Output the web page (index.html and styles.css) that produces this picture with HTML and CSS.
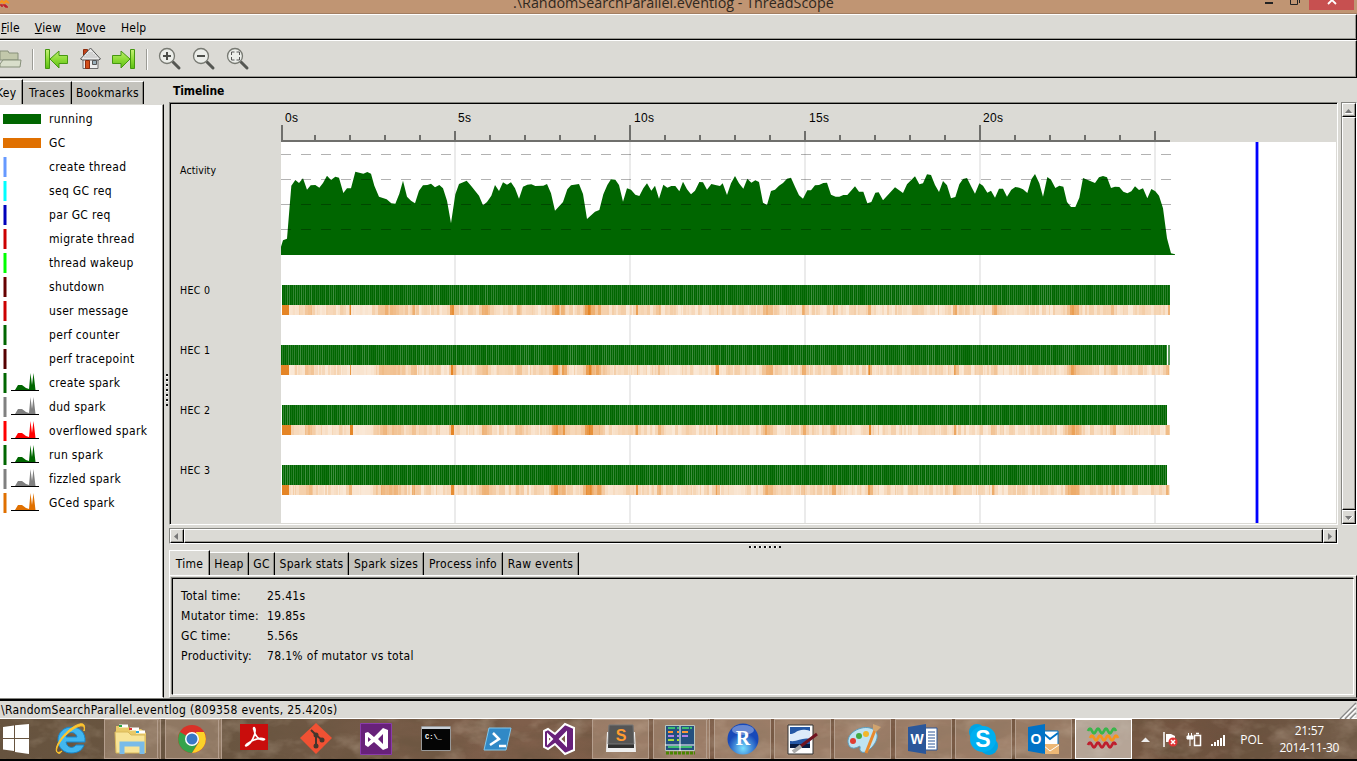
FILE: index.html
```html
<!DOCTYPE html>
<html lang="en">
<head>
<meta charset="utf-8">
<title>ThreadScope</title>
<link rel="stylesheet" href="styles.css">
</head>
<body>
<header class="titlebar">
  <svg class="app-mark" width="10" height="8"><path d="M0 3l2-2 2 2 2-2 3 2" stroke="#f7941d" stroke-width="2" fill="none"/><path d="M0 5h2v2m1-2h2v2m1-2v2h2" stroke="#be1e2d" stroke-width="1.6" fill="none"/></svg>
  <span class="title-text">.\RandomSearchParallel.eventlog - ThreadScope</span>
  <svg class="window-buttons" width="100" height="13"><path d="M8 2h8v2H8z" fill="#222"/><path d="M33.500 0v4.500h7V0M42.500 0v3" stroke="#222" fill="none"/><path d="M52 0h45v10H52z" fill="#c75050"/><path d="M71 4l4-4 4 4" stroke="#fff" stroke-width="1.800" fill="none"/></svg>
</header>
<nav class="menubar"><span><u>F</u>ile</span><span><u>V</u>iew</span><span><u>M</u>ove</span><span>Help</span></nav>
<div class="toolbar">
  <svg width="260" height="34" viewBox="0 42 260 34">
    <defs><linearGradient id="lime" x2="0" y2="1"><stop stop-color="#c5ef78"/><stop offset=".5" stop-color="#8fdc38"/><stop offset="1" stop-color="#5bbf12"/></linearGradient>
    <g id="lens"><path d="M11 10l6 6" stroke="#555753" stroke-width="3" stroke-linecap="round"/><circle r="7.500" cx="5" cy="4" fill="#eceeea" stroke="#777972" stroke-width="1.300"/></g></defs>
    <path d="M0 51h8l1 2h9v7H0z" fill="#c2c8ab" stroke="#87907a"/><path d="M3 60h18l-1 7H0v-3z" fill="#d9decb" stroke="#87907a"/>
    <path d="M32.500 49v21M146.500 49v21" stroke="#9b9b95"/><path d="M33.500 49v21M147.500 49v21" stroke="#fff"/>
    <path d="M45.500 49.500h4v19h-4zM50 59l9-8v4.500h8.500v8H59V68z" fill="url(#lime)" stroke="#459710" stroke-linejoin="round"/>
    <path d="M130.500 49.500h4v19h-4zM130 59l-9-8v4.500h-8.500v8H121V68z" fill="url(#lime)" stroke="#459710" stroke-linejoin="round"/>
    <path d="M83.500 49.500h4v6h-4z" fill="#c44218" stroke="#8c2b0c"/><path d="M83 58h15v10.500H83z" fill="#eee" stroke="#6d6d6d"/><path d="M80.500 59l10-11 10 11-2 1H82.500z" fill="#e8e8e8" stroke="#555"/><path d="M84 57h13M86 55h9M88 53h5" stroke="#bbb"/><path d="M85.500 60.500h4v8h-4z" fill="#d44f1b" stroke="#8c2b0c"/><path d="M92.500 60.500h4v4h-4z" fill="#9bb0bb" stroke="#555"/>
    <use href="#lens" x="162" y="52"/><path d="M163 56h8m-4-4v8" stroke="#4d4f4b" stroke-width="2"/>
    <use href="#lens" x="196" y="52"/><path d="M197 56h8" stroke="#4d4f4b" stroke-width="2"/>
    <use href="#lens" x="230" y="52"/><path d="M231.500 55v-3h3m2 0h3v3m0 2v3h-3m-2 0h-3v-3" fill="none" stroke="#555"/>
  </svg>
</div>
<main class="workspace">
  <aside class="sidebar">
    <div class="tabs side-tabs"><span class="tab active">Key</span><span class="tab">Traces</span><span class="tab">Bookmarks</span></div>
    <ul class="key-list" id="keys"></ul>
  </aside>
  <div class="grip-v"><i></i></div>
  <section class="content">
    <h1>Timeline</h1>
    <div class="timeline-row">
      <div class="timeline"><svg id="chart" width="1166" height="420" viewBox="171 104 1166 420"></svg></div>
      <div class="scroll-v"><button><svg width="11" height="11"><path d="M2 8h7L5.500 4z" fill="#777"/><path d="M2 8.500h8" stroke="#fff"/></svg></button><b></b><button><svg width="11" height="11"><path d="M2 4h7L5.500 8z" fill="#777"/><path d="M6 8l4-4" stroke="#fff"/></svg></button></div>
    </div>
    <div class="scroll-h"><button><svg width="10" height="11"><path d="M7 2v7L3 5.500z" fill="#777"/></svg></button><b></b><button><svg width="10" height="11"><path d="M4 2v7l4-3.500z" fill="#777"/></svg></button></div>
    <div class="grip-h"><i></i></div>
    <div class="tabs info-tabs"><span class="tab active">Time</span><span class="tab">Heap</span><span class="tab">GC</span><span class="tab">Spark stats</span><span class="tab">Spark sizes</span><span class="tab">Process info</span><span class="tab">Raw events</span></div>
    <div class="info-page"><dl class="stats"><dt>Total time:</dt><dd>25.41s</dd><dt>Mutator time:</dt><dd>19.85s</dd><dt>GC time:</dt><dd>5.56s</dd><dt>Productivity:</dt><dd>78.1% of mutator vs total</dd></dl></div>
  </section>
</main>
<footer class="statusbar"><span>\RandomSearchParallel.eventlog (809358 events, 25.420s)</span><svg width="18" height="17"><path d="M1 17L17 1M6 17L17 6M11 17l6-6" stroke="#888" stroke-width="1.500"/><path d="M3 17L17 3M8 17l9-9M13 17l4-4" stroke="#fff" stroke-width="1.300"/></svg></footer>
<div class="taskbar">
  <svg class="grain" width="1357" height="40"><filter id="wood"><feTurbulence type="fractalNoise" baseFrequency=".018 .05" numOctaves="5" seed="8"/><feColorMatrix values="0 0 0 0 .14  0 0 0 0 .09  0 0 0 0 .05  2.6 0 0 0 -.9"/></filter><filter id="scuff"><feTurbulence type="fractalNoise" baseFrequency=".03 .05" numOctaves="4" seed="21"/><feColorMatrix values="0 0 0 0 .75  0 0 0 0 .62  0 0 0 0 .48  0 2.4 0 0 -1.15"/></filter><rect width="1357" height="40" filter="url(#wood)" opacity=".6"/><rect width="1357" height="40" filter="url(#scuff)" opacity=".3"/></svg>
  <div class="launch start"><svg width="40" height="40"><path d="M3 8l11-1.500V19H3zM15 6.300L29 5v14H15zM3 20h11v12L3 30.500zM15 20h14v15l-14-2z" fill="#fff"/></svg></div>
  <div class="launch ie"><svg width="40" height="40" viewBox="-20 -20 40 40"><path d="M13 6h-8C2 10-4 9-5 3h19C15-7 8-12 1-12c-9 0-14 6-14 13 0 8 6 13 13 13 6 0 11-2 13-8zM-5-2c1-6 10-6 11 0z" fill="#42b7f0" stroke="#1687cc"/><path d="M-9 12c-10 6-5-8 5-17C5-13 15-17 13-8c3-10-5-9-15-1S-18 12-13 14c1 1 3 0 4-2z" fill="#ffc52e" stroke="#ffc52e"/></svg></div>
  <div class="launch framed stacked"><svg width="40" height="38" viewBox="-20 -19 40 38"><path d="M-15-13h12l2 3h11l5 4v20h-30z" fill="#e9c967"/><path d="M-12-13h9m2 3h9m-3 3h9" stroke="#fff" stroke-width="3"/><path d="M-12-13h3" stroke="#27a844" stroke-width="2"/><path d="M-2-10h3" stroke="#d33" stroke-width="2"/><path d="M5-7h3" stroke="#2aa7df" stroke-width="2"/><path d="M-16-7H-3l3 3h14v18h-29z" fill="#f8e497" stroke="#d9b85b"/><path d="M-9 15V5H11v10" fill="none" stroke="#79bbe8" stroke-width="5"/></svg></div>
  <div class="launch framed stacked"><svg width="40" height="38" viewBox="-20 -19 40 38"><circle r="14" fill="#da3127"/><path d="M0 0l-12-7A14 14 0 000 14l6-10z" fill="#35a34a"/><path d="M4-7h8A14 14 0 010 14L7 3z" fill="#fbd229"/><circle r="7" fill="#fff"/><circle r="5.500" fill="#3978c6"/></svg></div>
  <div class="launch"><svg width="40" height="40" viewBox="-20 -20 40 40"><path d="M-15-15h28v26h-28z" fill="#c90d0c"/><path d="M-9 7C-4 5 1-4 0-10c-1-3-2-1-1 1 1 6 5 10 9 10 5-1-3-3-9 0-5 2-10 6-8 6z" fill="none" stroke="#fff" stroke-width="1.600"/></svg></div>
  <div class="launch"><svg width="40" height="40" viewBox="-20 -20 40 40"><path d="M0-16L16-1 0 15-16-1z" fill="#f05133"/><path d="M-5-9L0-4V8M0-4l6 5" fill="none" stroke="#45362c" stroke-width="2"/><g fill="#45362c"><circle cy="-4" r="2.500"/><circle cy="7" r="2.500"/><circle cx="6" cy="1" r="2.500"/></g></svg></div>
  <div class="launch"><svg width="40" height="40" viewBox="-20 -20 40 40"><path d="M-16.500-15.500h31v31h-31z" fill="#68217a" stroke="#8b3caa"/><path d="M-12-6l3-1 6 5 9-9 5 2V9L6 11-3 3l-6 5-3-2zM-9-2v5l3-2.500zM6-5L1 0l5 5z" fill="#fff" fill-rule="evenodd"/></svg></div>
  <div class="launch"><svg width="40" height="40" viewBox="-20 -20 40 40"><path d="M-16.500-12.500h29v24h-29z" fill="#050505" stroke="#999"/><path d="M-16-12h28v2h-28z" fill="#c9d0d8"/><text x="-13" y="0" class="cmd-text">C:\_</text></svg></div>
  <div class="launch"><svg width="40" height="40" viewBox="-20 -20 40 40"><path d="M-10-11h22L7 11h-22z" fill="#3189c6" stroke="#82c7ea"/><path d="M-6-6l6 6-9 6M0 7h7" stroke="#fff" stroke-width="2.500" fill="none"/></svg></div>
  <div class="launch"><svg width="40" height="40" viewBox="-20 -20 40 40"><path d="M-16-8l4-2 7 5L5-15l9 4v22l-9 4L-5 5l-7 5-4-2zM-12-4v8l4-4zM6-6L0 0l6 6z" fill="#68217a" stroke="#fff" stroke-width="2" fill-rule="evenodd"/></svg></div>
  <div class="launch framed"><svg width="40" height="38" viewBox="-20 -19 40 38"><path d="M-12-7h-2l-1 20h30L14-7z" fill="#eee"/><path d="M-12-14h24l1 20v3h-26V6z" fill="#303030"/><path d="M-12-14h24l1 19h-26z" fill="#555" stroke="#777"/><text y="2" class="sublime-text">S</text></svg></div>
  <div class="launch framed stacked"><svg width="40" height="38" viewBox="-20 -19 40 38"><path d="M-14.500-13.500h29v25h-29z" fill="#24507f" stroke="#b8c7c0"/><path d="M-12-11h7m7 0h7M-3-11h2m11 0h2M-12 8h24" stroke="#45e26d" stroke-width="1.500"/><path d="M-12-7h5m4 0h2m3 0h6" stroke="#ff9735" stroke-width="2"/><path d="M-12-3h6m3 0h2m3 0h6" stroke="#b47fe5" stroke-width="2"/><path d="M-12 1h6m3 0h2" stroke="#a5df39" stroke-width="2"/><path d="M0-13v25M-15 6h29" stroke="#fff"/><path d="M-14 14h29" stroke="#498700" stroke-width="3" stroke-dasharray="3 1"/></svg></div>
  <div class="launch framed later"><svg width="40" height="38" viewBox="-20 -19 40 38"><defs><radialGradient id="rball" cy=".8"><stop stop-color="#7ae0ff"/><stop offset="1" stop-color="#1749b9"/></radialGradient></defs><circle r="15.500" fill="url(#rball)"/><ellipse cy="-9" rx="11" ry="5" fill="#fff" opacity=".35"/><text y="6" class="r-text">R</text></svg></div>
  <div class="launch framed later"><svg width="40" height="38" viewBox="-20 -19 40 38"><path d="M-15-14h25v29h-25z" fill="#fff" stroke="#333"/><path d="M-13-12h20V8h-20z" fill="#2457a5"/><path d="M-13-5c6 1 7-7 20-3v8c-8-2-12 3-20 2z" fill="#dceafa"/><path d="M-13 5H7v4h-20z" fill="#091c42"/><path d="M14-5L-2 7" stroke="#701420" stroke-width="3"/><path d="M-2 7l-8 6" stroke="#aaa" stroke-width="4"/></svg></div>
  <div class="launch framed later"><svg width="40" height="38" viewBox="-20 -19 40 38"><path d="M-13 8C-21-3-4-14 7-11c11 3 8 14 0 21-6 6-11 3-10-1 1-5-4 3-10-1z" fill="#bfe3f2" stroke="#5b9ebf"/><circle cx="-10" cy="2" r="3" fill="#df3d32"/><circle cx="-4" cy="-3" r="3" fill="#41aa44"/><circle cx="3" cy="-5" r="3" fill="#f2b72a"/><path d="M12-9L3 14" stroke="#e7882d" stroke-width="3"/><path d="M10-15l8 3-5 5-3-2z" fill="#d1a46f"/></svg></div>
  <div class="launch framed later"><svg width="40" height="38" viewBox="-20 -19 40 38"><path d="M2-11h12v22H2z" fill="#fff" stroke="#2b579a"/><path d="M5-7h7M5-4h7M5-1h7M5 2h7M5 5h7M5 8h7" stroke="#2b579a"/><path d="M-15-12L3-15v30l-18-3z" fill="#2b579a"/><text x="-6" y="5" class="word-text">W</text></svg></div>
  <div class="launch framed later"><svg width="40" height="38" viewBox="-20 -19 40 38"><circle cx="-6" cy="-7" r="8" fill="#00a4e4"/><circle cx="6" cy="7" r="9" fill="#00a4e4"/><circle r="13" fill="#00aff0"/><text y="8" class="skype-text">S</text></svg></div>
  <div class="launch framed later"><svg width="40" height="38" viewBox="-20 -19 40 38"><path d="M0-8h15V8H0z" fill="#fff" stroke="#0072c6"/><path d="M0-6l7 6 8-6" fill="none" stroke="#0072c6" stroke-width="2"/><path d="M0 5h16v10H0z" fill="#edb775"/><path d="M0 6l7 6 9-6" fill="none" stroke="#fff"/><path d="M-15-12L2-15v30l-17-3z" fill="#0072c6"/><text x="-7" y="5" class="outlook-text">O</text></svg></div>
  <div class="launch framed current later"><svg width="40" height="38" viewBox="-20 -19 40 38" fill="none" stroke-width="2.800"><path stroke="#39b54a" d="M-16-8q2-4.500 4 0t4 0 4 0 4 0 4 0 4 0 4 0"/><path stroke="#f7941d" d="M-14-1q2-4.500 4 0t4 0 4 0 4 0 4 0 4 0 4 0"/><path stroke="#be1e2d" d="M-16 6q2-4.500 4 0t4 0 4 0 4 0 4 0 4 0 4 0"/></svg></div>
  <div class="tray"><svg width="100" height="40" viewBox="1135 719 100 40"><path d="M1141 742h9l-4.500-4.500z" fill="#eee"/><path d="M1164 732v15" stroke="#fff" stroke-width="1.500"/><path d="M1166 734h5l4 2v6h-9z" fill="#fff"/><circle cx="1173" cy="742" r="4.500" fill="#df3434"/><path d="M1171 740l4 4m0-4l-4 4" stroke="#fff" stroke-width="1.500"/><path d="M1188.500 733v3m3-3v3M1187 736h6v3h-6zM1190 739v7" fill="#fff" stroke="#fff"/><path d="M1194.500 735.500h6v10h-6zM1196 733.500h3" fill="none" stroke="#fff" stroke-width="1.500"/><path d="M1212 746v-2m3 2v-4m3 4v-6m3 6v-8m3 8v-11" stroke="#fff" stroke-width="2"/></svg><span class="lang">POL</span><time>21:57<br>2014-11-30</time></div>
</div>
<script src="app.js"></script>
</body>
</html>
```
FILE: styles.css
```css
* { box-sizing: border-box; }
body { margin: 0; width: 1357px; height: 761px; overflow: hidden; display: flex; flex-direction: column; background: #dbdad5; color: #000; font: 12px/16px "DejaVu Sans Condensed", "DejaVu Sans", sans-serif; font-stretch: condensed; letter-spacing: .33px; }
svg { display: block; flex: none; letter-spacing: 0; }
.titlebar { height: 14px; flex: none; display: flex; background: #c09573; border-bottom: 1px solid #a27e62; overflow: hidden; }
.title-text { width: 330px; margin-left: 503px; font: 14.350px/20px "Open Sans", sans-serif; font-stretch: normal; letter-spacing: 0; margin-top: -7px; white-space: nowrap; color: #302820; }
.window-buttons { margin-left: auto; }
.menubar { height: 26px; flex: none; display: flex; align-items: center; gap: 15px; padding: 1px 0 0 1px; border: solid; border-width: 1px 1px 1px 0; border-color: #fff #000 #000; box-shadow: inset -1px -1px #999892; }
.menubar span { letter-spacing: .2px; }
.toolbar { height: 38px; flex: none; border: solid; border-width: 1px 1px 1px 0; border-color: #fff #000 #000; box-shadow: inset -1px -1px #999892; padding-top: 1px; }
.workspace { height: 620px; flex: none; display: flex; }
.sidebar { width: 164px; flex: none; display: flex; flex-direction: column; }
.tabs { display: flex; align-items: flex-end; white-space: nowrap; flex: none; letter-spacing: .28px; }
.tab { height: 23px; line-height: 23px; background: #c4c3bd; border-right: 1px solid #000; border-top: 1px solid #fff; box-shadow: inset -1px 0 #8f8e88; text-align: center; }
.tab.active { height: 25px; line-height: 27px; background: #dbdad5; }
.side-tabs { height: 26px; padding-top: 1px; overflow: hidden; }
.side-tabs .tab { width: 49px; }
.side-tabs .tab:first-child { width: 23px; text-indent: -4px; text-align: left; }
.side-tabs .tab:last-child { width: 72px; }
.key-list { list-style: none; margin: 0; padding: 2px 0 0 3px; flex: 1; background: #fff; border: solid; border-width: 1px 1px 1px 0; border-color: #dbdad5 #000 #fff; box-shadow: inset -1px 0 #999892; }
.key-list li { height: 24px; display: flex; align-items: center; }
.swatch { width: 46px; flex: none; }
.grip-v { width: 5px; flex: none; padding: 296px 0 0 2px; }
.grip-v i { display: block; width: 2px; height: 32px; background: repeating-linear-gradient(#111 0 2px, #fff 2px 3px, #dbdad5 3px 5px); }
.content { width: 1188px; flex: none; display: flex; flex-direction: column; }
h1 { margin: 0; height: 24px; font-size: 12px; line-height: 26px; padding-left: 4px; letter-spacing: -.1px; }
.timeline-row { display: flex; gap: 3px; height: 423px; }
.timeline { width: 1169px; border: solid; border-width: 1px; border-color: #858580 #fff #fff #858580; box-shadow: inset 1px 1px #000; padding: 1px 0 0 1px; overflow: hidden; }
.scroll-v { width: 16px; border: 1px solid; border-color: #858580 #fff #fff #858580; display: flex; flex-direction: column; }
button { flex: none; background: #dbdad5; border: 1px solid; border-color: #fff #000 #000 #fff; box-shadow: inset -1px -1px #999892; padding: 0; margin: 0; }
.scroll-v button { width: 14px; height: 14px; }
.scroll-v b, .scroll-h b { flex: 1; border: 1px solid; border-color: #fff #000 #000 #fff; box-shadow: inset -1px -1px #999892; }
.scroll-h { width: 1169px; height: 16px; flex: none; margin-top: 3px; display: flex; border: 1px solid; border-color: #858580 #fff #fff #858580; }
.scroll-h button { width: 14px; height: 14px; }
.grip-h { height: 5px; flex: none; padding: 2px 0 0 580px; }
.grip-h i { display: block; width: 32px; height: 2px; background: repeating-linear-gradient(90deg, #111 0 2px, #fff 2px 3px, #dbdad5 3px 5px); }
.info-tabs { height: 26px; }
.info-tabs .tab:nth-child(1) { width: 41px; border-left: 1px solid #fff; }
.info-tabs .tab:nth-child(2) { width: 39px; }
.info-tabs .tab:nth-child(3) { width: 26px; }
.info-tabs .tab:nth-child(4) { width: 74px; }
.info-tabs .tab:nth-child(5) { width: 75px; }
.info-tabs .tab:nth-child(6) { width: 79px; }
.info-tabs .tab:nth-child(7) { width: 76px; }
.info-page { flex: 1; border: solid; border-width: 1px 1px 1px; border-color: #fff #000 #858580 #fff; padding: 2px; display: flex; }
.stats { margin: 0; flex: 1; border: 1px solid; border-color: #000 #fff #fff #000; box-shadow: -1px -1px #858580; padding: 7px 8px; display: grid; grid-template-columns: 86px auto; grid-auto-rows: 20px; line-height: 20px; align-content: start; }
dd { margin: 0; }
.statusbar { height: 21px; flex: none; display: flex; justify-content: space-between; border-top: 1px solid #858580; border-bottom: 1px solid #fff; box-shadow: inset 0 2px #000; padding: 3px 0 0 1px; line-height: 16px; }
.taskbar { position: relative; height: 42px; flex: none; display: flex; border-bottom: 2px solid #000; background: linear-gradient(90deg, #66533f, #6c5743 20%, #7f5f4b 38%, #7b5b45 80%, #6c503e 92%, #79624f); color: #fff; letter-spacing: 0; }
.grain { position: absolute; inset: 0; }
.launch { position: relative; width: 57px; height: 40px; margin-right: 4px; flex: none; display: flex; justify-content: center; align-items: center; }
.start { width: 40px; margin: 0; justify-content: flex-start; }
.ie { width: 60px; margin-right: 4px; justify-content: flex-start; padding-left: 11px; }
.framed { border: 1px solid #b49e8d; background: rgba(200,172,150,.4); }
.stacked { border-right: 4px double #b49e8d; }
.later { margin-right: 3.200px; }
.current { border: 1px solid #fff; background: rgba(225,216,208,.6); }
.tray { position: relative; flex: 1; display: flex; align-items: center; font: 12px/17px "Open Sans", sans-serif; }
.lang { width: 36px; margin-left: 5px; }
.tray time { text-align: center; width: 66px; letter-spacing: -.3px; }
.cmd-text { font: bold 7px "Liberation Mono", monospace; fill: #fff; }
.sublime-text, .r-text, .word-text, .skype-text, .outlook-text { text-anchor: middle; fill: #fff; font: bold 17px "Liberation Sans", sans-serif; }
.sublime-text { fill: #ff9b30; font-size: 16px; }
.r-text { font-family: "Liberation Serif", serif; font-size: 20px; }
.word-text, .outlook-text { font-size: 14px; }
.skype-text { font-size: 23px; }
.axis-text { font: 12px "Liberation Sans", sans-serif; }
.row-text { font: 10.500px "DejaVu Sans Condensed", "DejaVu Sans", sans-serif; font-stretch: condensed; }
```
FILE: app.js
```js
const keyRows = [
  ['running', '#060', 'bar'], ['GC', '#e07000', 'bar'], ['create thread', '#69f', 'line'],
  ['seq GC req', '#0ff', 'line'], ['par GC req', '#00b', 'line'], ['migrate thread', '#c00', 'line'],
  ['thread wakeup', '#0f0', 'line'], ['shutdown', '#600', 'line'], ['user message', '#c00', 'line'],
  ['perf counter', '#060', 'line'], ['perf tracepoint', '#500', 'line'], ['create spark', '#060', 'spark'],
  ['dud spark', '#808080', 'spark'], ['overflowed spark', '#f00', 'spark'], ['run spark', '#060', 'spark'],
  ['fizzled spark', '#808080', 'spark'], ['GCed spark', '#e07000', 'spark']
];
document.getElementById('keys').innerHTML = keyRows.map(([label, color, kind]) => {
  let mark = `<rect y="2" width="4" height="20" fill="${color}" opacity=".5"/><rect x="1" y="2" width="2" height="20" fill="${color}"/>`;
  if (kind === 'bar') mark = `<rect y="7" width="38" height="10" fill="${color}"/>`;
  if (kind === 'spark') mark += `<path d="M12 19l3-5h4l4 3 3 1 1.500-16L29 14l1.500-12 2 17z" fill="${color}"/><path d="M8 19.500h28" stroke="#000"/>`;
  return `<li><svg class="swatch" width="46" height="24">${mark}</svg>${label}</li>`;
}).join('');

const left = '33,440 39,421 51,416 64,257 76,240 87,249 99,235 111,269 122,256 136,255 148,263 159,249 171,227 183,240 196,230 207,233 220,279 231,265 243,265 256,215 280,221 292,216 303,221 313,257 327,290 350,298 364,310 376,311 388,281 399,242 411,290 423,302 435,310 447,272 459,256 472,255 483,251 495,262 508,255 519,265 531,302 543,370 556,283 567,252 590,242 603,257 627,287 639,316 651,306 664,287 675,255 687,273 699,247 711,254 723,247 735,265 747,296 759,260 772,254 784,253 796,258 820,257 831,252 843,280 855,332 879,306 892,268 903,256 927,252 939,282 951,357 975,335 988,330 1000,283 1012,255 1023,238 1036,239 1047,255 1059,305 1071,265 1083,269 1096,284 1108,288 1120,265 1131,250 1144,272 1155,257 1167,296 1180,254 1192,263 1204,258 1216,258 1228,274 1239,245 1251,268 1263,283 1275,272 1288,246 1299,247 1311,269 1324,252 1336,255';
const right = '0,258 8,250 21,285 33,250 45,228 57,250 70,266 82,236 94,248 106,241 117,246 129,308 141,315 153,273 165,269 177,257 189,249 201,236 213,233 225,260 237,286 249,296 262,271 273,271 285,256 297,255 310,249 321,248 333,284 347,290 358,290 370,285 382,285 405,259 417,275 430,275 442,310 454,306 466,278 476,277 489,301 525,262 549,279 561,253 585,229 598,253 609,250 621,223 633,225 645,255 657,276 669,243 681,256 693,295 706,291 718,253 729,237 741,234 754,260 765,281 778,250 789,257 802,278 813,272 825,293 837,266 849,266 861,290 874,269 886,261 898,263 909,268 922,279 934,238 945,222 958,250 969,290 982,231 993,239 1006,264 1018,257 1030,260 1041,306 1053,321 1066,321 1078,293 1089,234 1125,249 1137,232 1149,228 1161,232 1173,264 1185,260 1198,261 1210,275 1222,280 1234,274 1245,259 1257,270 1269,265 1282,295 1294,267 1306,274 1317,287 1329,325 1341,415 1353,460 1365,463';
const read = (s, offset) => s.split(' ').map(p => { const [x, y] = p.split(',').map(Number); return [270 + (x + offset) / 3, 100 + y / 3]; });
const points = [...read(left, 0), ...read(right, 1350)];

let out = '<rect x="171" y="104" width="1166" height="420" fill="#dbdad5"/><rect x="281" y="142" width="1055" height="381" fill="#fff"/>';
for (let x = 455; x < 1170; x += 175) out += `<rect x="${x - 1}" y="142" width="2" height="381" fill="#ebebeb"/>`;
out += `<polygon points="281,255 ${points.join(' ')} 1175,255" fill="#060"/>`;
for (const y of [154, 179, 204, 229]) out += `<path d="M281 ${y + .5}H1171" stroke="#000" stroke-opacity=".3" stroke-dasharray="10 10"/>`;
out += '<rect x="281" y="140" width="889" height="2" fill="#6f6f6c"/>';
for (let i = 0; i <= 25; i++) {
  const x = i ? 279 + i * 35 : 281;
  const y = i % 10 === 0 ? 125 : i % 5 === 0 ? 131 : 135;
  out += `<rect x="${x}" y="${y}" width="2" height="${141 - y}" fill="#6f6f6c"/>`;
}
[[285, '0s'], [458, '5s'], [634, '10s'], [809, '15s'], [983, '20s']].forEach(([x, t]) => out += `<text class="axis-text" x="${x}" y="122" textLength="${t.length === 2 ? 13 : 20}">${t}</text>`);
out += '<text class="row-text" x="180" y="174" textLength="36">Activity</text>';

let seed = 17;
const rand = () => (seed = (seed * 16807) % 2147483647) / 2147483647;
const peaks = [[308, 4, .22], [350, 1.2, .55], [383, 7, .22], [396, 8, .18], [413, 2, .3], [451, 2, .58], [484, 5, .25], [518, 3, .18], [555, 4, .5], [563, 2, .4], [588, 5, .55], [598, 4, .3], [636, 1, .38], [658, 2, .28], [716, 1, .4], [767, 5, .3], [803, 2, .3], [833, 2, .35], [869, 1.200, .65], [954, 1.5, .45], [993, 2, .3], [1072, 6, .35], [1112, 2, .25], [1167, 1, .65]];
for (let row = 0; row < 4; row++) {
  const y = 285 + row * 60;
  const start = row === 1 ? 281 : 282;
  const end = row === 0 ? 1170 : 1167;
  out += `<text class="row-text" x="180" y="${y + 9}" textLength="30">HEC ${row}</text>`;
  out += `<rect x="${start}" y="${y}" width="${end - start}" height="20" fill="#060"/>`;
  for (let x = start + 1; x < end; x += 2) out += `<rect x="${x}" y="${y}" width="1" height="20" fill="#fff" opacity="${(.06 + rand() * .2).toFixed(2)}"/>`;
  if (row === 1) out += '<path d="M1169 345v20" stroke="#237923" stroke-width="1.500"/>';
  out += `<rect x="${start}" y="${y + 20}" width="${1170 - start}" height="10" fill="#fff"/>`;
  for (let x = start; x < 1170;) {
    const w = 1 + Math.floor(rand() * 3);
    let alpha = .15 + rand() * .2;
    for (const [p, r, a] of peaks) alpha += a * Math.exp(-(((x - p) / r) ** 2));
    if (x < 289) alpha = .85;
    if (x > 350 && x < 372) alpha = .16 + rand() * .04;
    out += `<rect x="${x}" y="${y + 20}" width="${Math.min(w, 1170 - x)}" height="10" fill="#e07000" opacity="${Math.min(.85, alpha).toFixed(2)}"/>`;
    x += w;
  }
}
out += '<rect x="1255" y="142" width="4" height="381" fill="#99f"/><rect x="1256" y="142" width="2" height="381" fill="#00f"/>';
document.getElementById('chart').innerHTML = out;
```
